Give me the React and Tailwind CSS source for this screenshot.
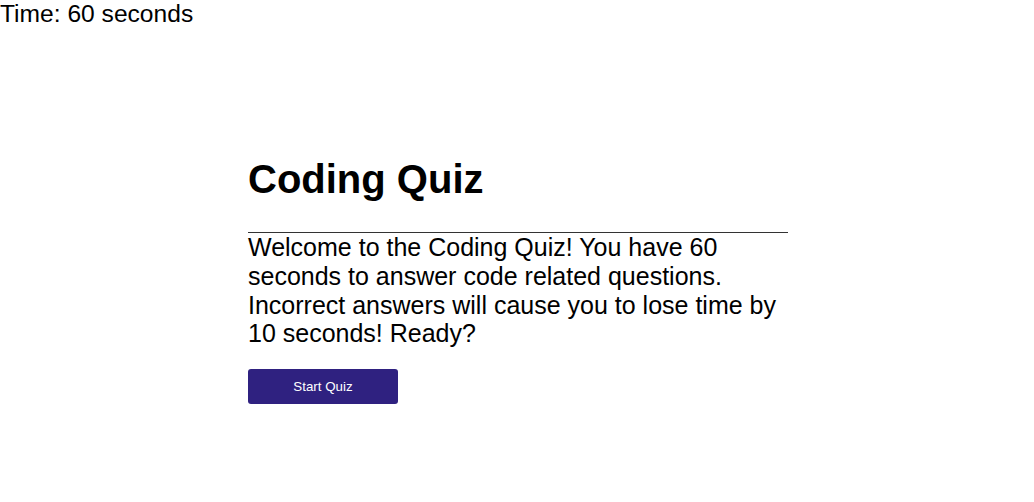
export default function App() {
  return (
    <div className="min-h-[502px] bg-white text-black" style={{ fontFamily: '"Liberation Sans", Arial, sans-serif' }}>
      <div className="text-[24.6px] leading-[27px]">Time: 60 seconds</div>
      <div className="mt-[129px] ml-[248px] w-[540px]">
        <h1 className="text-[40px] leading-[46px] font-bold pb-[30px] border-b border-[#333]">Coding Quiz</h1>
        <p className="text-[25px] leading-[28.75px]">
          Welcome to the Coding Quiz! You have 60 seconds to answer code related questions. Incorrect answers will cause you to lose time by 10 seconds! Ready?
        </p>
        <button className="mt-[21px] w-[150px] h-[35px] rounded-[3px] bg-[#2f2180] text-white text-[13.33px]">
          Start Quiz
        </button>
      </div>
    </div>
  );
}
